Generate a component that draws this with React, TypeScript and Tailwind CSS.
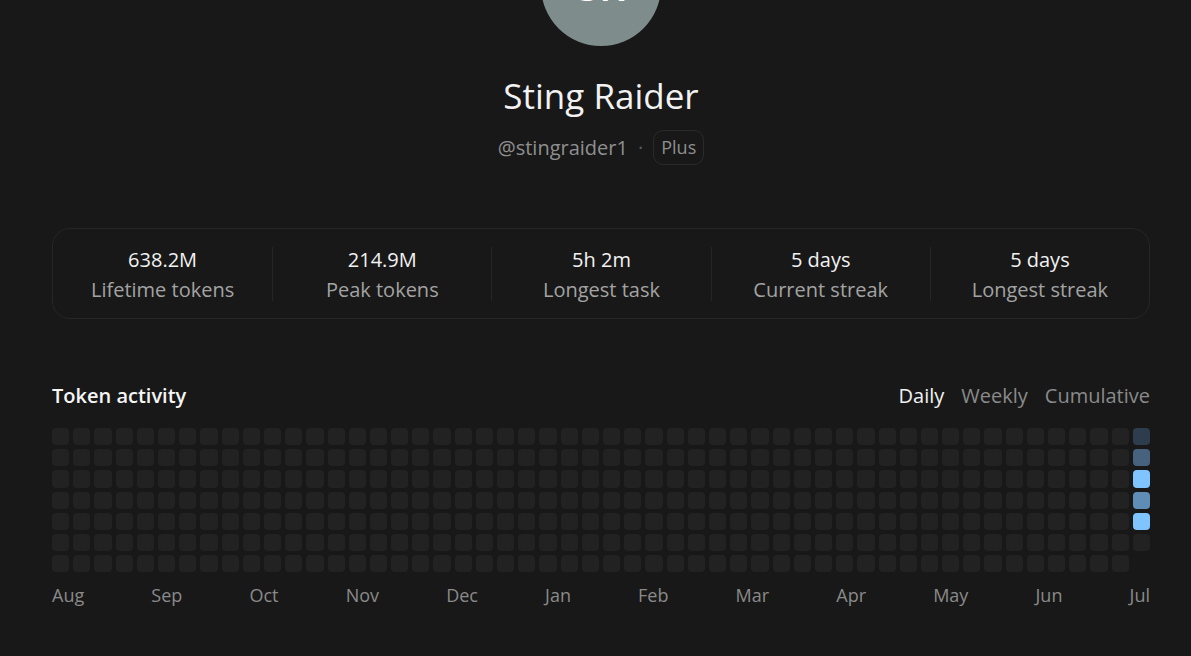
const stats = [
  { value: "638.2M", label: "Lifetime tokens" },
  { value: "214.9M", label: "Peak tokens" },
  { value: "5h 2m", label: "Longest task" },
  { value: "5 days", label: "Current streak" },
  { value: "5 days", label: "Longest streak" },
];

const months = ["Aug", "Sep", "Oct", "Nov", "Dec", "Jan", "Feb", "Mar", "Apr", "May", "Jun", "Jul"];

// last week: colours per weekday, the rest of the year is empty
const lastWeek = ["bg-[#2e3d4d]", "bg-[#46627d]", "bg-[#80c4ff]", "bg-[#5f8db5]", "bg-[#80c4ff]", "bg-[#222222]"];

function cellClass(i: number) {
  const week = Math.floor(i / 7);
  const day = i % 7;
  if (week === 51) return lastWeek[day];
  return "bg-[#222222]";
}

export default function App() {
  const cells = Array.from({ length: 51 * 7 + 6 }, (_, i) => i);

  return (
    <div
      className="min-h-[656px] w-full overflow-hidden bg-[#181818] text-white"
      style={{ fontFamily: '"Open Sans", "Noto Sans", sans-serif' }}
    >
      <div className="pl-[52px] pr-[41px]">
        <div className="flex flex-col items-center">
          <div className="mt-[-74px] flex h-[120px] w-[120px] items-center justify-center rounded-full bg-[#7f8c8c]">
            <span className="text-[40px] font-semibold">SR</span>
          </div>
          <h1 className="mt-[28px] text-[35px] leading-[44px] text-[#f2f2f2]">Sting Raider</h1>
          <div className="mt-[12px] flex items-center gap-[10px] text-[20px] text-[#8f8f8f]">
            <span>@stingraider1</span>
            <span className="text-[#5a5a5a]">·</span>
            <span className="rounded-[10px] border border-[#2a2a2a] px-[7px] py-[3px] text-[18px] leading-[27px]">Plus</span>
          </div>
        </div>

        <div className="mt-[63px] grid h-[91px] grid-cols-5 items-center rounded-[18px] border border-[#262626]">
          {stats.map((s, i) => (
            <div
              key={s.label}
              className={`flex h-[54px] flex-col items-center justify-center ${i > 0 ? "border-l border-[#262626]" : ""}`}
            >
              <div className="pt-[3px] text-[20px] leading-[30px] text-[#f2f2f2]">{s.value}</div>
              <div className="text-[20px] leading-[30px] text-[#a3a3a3]">{s.label}</div>
            </div>
          ))}
        </div>

        <div className="mt-[62px] flex items-center justify-between">
          <h2 className="text-[20px] font-semibold text-[#f5f5f5]">Token activity</h2>
          <div className="flex gap-[17px] text-[20px]">
            <span className="text-[#f2f2f2]">Daily</span>
            <span className="text-[#8a8a8a]">Weekly</span>
            <span className="text-[#8a8a8a]">Cumulative</span>
          </div>
        </div>

        <div className="mt-[17px] grid grid-flow-col grid-rows-7 grid-cols-[repeat(52,minmax(0,1fr))] gap-[4px]">
          {cells.map((i) => (
            <div key={i} className={`aspect-square rounded-[4px] ${cellClass(i)}`} />
          ))}
        </div>

        <div className="mt-[10px] flex justify-between text-[18px] text-[#8a8a8a]">
          {months.map((m) => (
            <span key={m}>{m}</span>
          ))}
        </div>
      </div>
    </div>
  );
}
